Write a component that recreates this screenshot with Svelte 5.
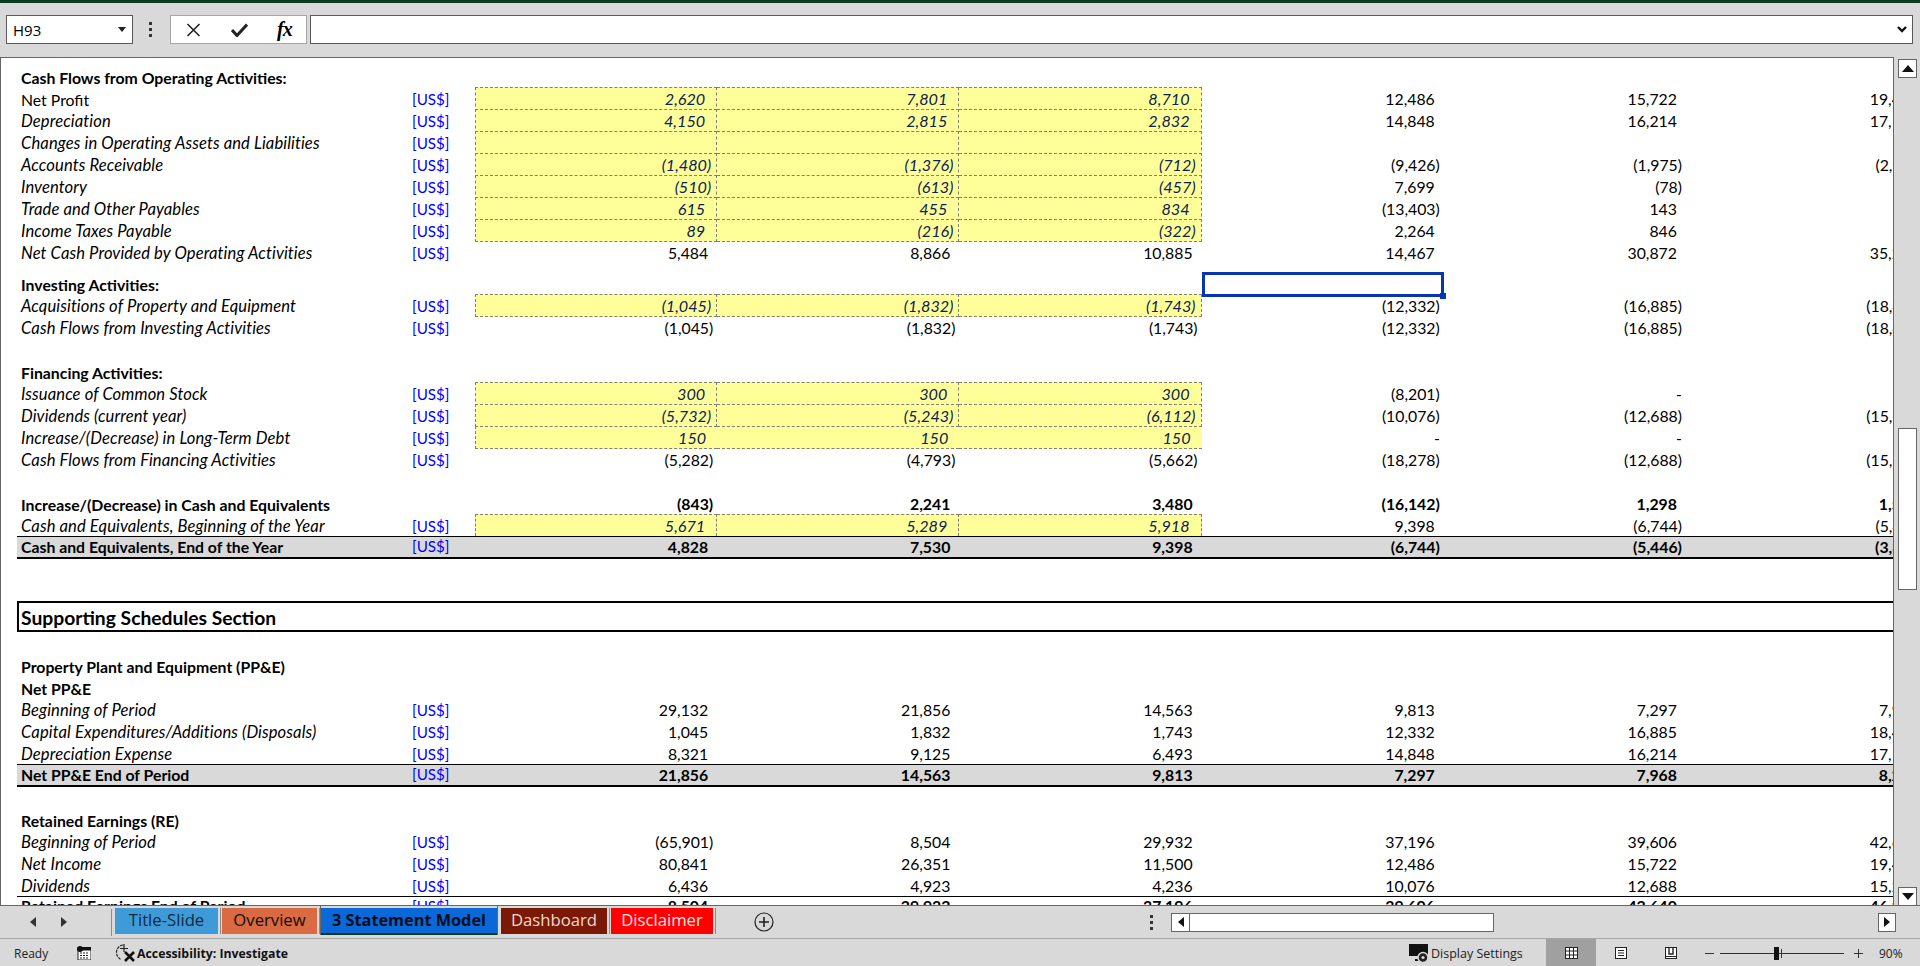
<script lang="ts">
    const row = (label: string, kind: string, vals: string[] = [], opts: any = {}) => ({
        label,
        kind,
        vals,
        unit: true,
        ...opts,
    });
    const gap = (h: number) => ({ gap: h });

    const rows: any[] = [
        gap(7),
        row("Cash Flows from Operating Activities:", "bold", [], { unit: false }),
        row("Net Profit", "plain", ["2,620", "7,801", "8,710", "12,486", "15,722", "19,480"], { input: true }),
        row("Depreciation", "ital", ["4,150", "2,815", "2,832", "14,848", "16,214", "17,121"], { input: true }),
        row("Changes in Operating Assets and Liabilities", "ital", [], { input: true }),
        row("Accounts Receivable", "ital", ["(1,480)", "(1,376)", "(712)", "(9,426)", "(1,975)", "(2,310)"], { input: true }),
        row("Inventory", "ital", ["(510)", "(613)", "(457)", "7,699", "(78)", ""], { input: true }),
        row("Trade and Other Payables", "ital", ["615", "455", "834", "(13,403)", "143", ""], { input: true }),
        row("Income Taxes Payable", "ital", ["89", "(216)", "(322)", "2,264", "846", ""], { input: true, last: true }),
        row("Net Cash Provided by Operating Activities", "ital", ["5,484", "8,866", "10,885", "14,467", "30,872", "35,214"]),
        gap(9),
        row("Investing Activities:", "bold", [], { unit: false, selected: true }),
        row("Acquisitions of Property and Equipment", "ital", ["(1,045)", "(1,832)", "(1,743)", "(12,332)", "(16,885)", "(18,420)"], { input: true, last: true }),
        row("Cash Flows from Investing Activities", "ital", ["(1,045)", "(1,832)", "(1,743)", "(12,332)", "(16,885)", "(18,420)"]),
        gap(22),
        row("Financing Activities:", "bold", [], { unit: false }),
        row("Issuance of Common Stock", "ital", ["300", "300", "300", "(8,201)", "-", ""], { input: true }),
        row("Dividends (current year)", "ital", ["(5,732)", "(5,243)", "(6,112)", "(10,076)", "(12,688)", "(15,240)"], { input: true, last: true }),
        row("Increase/(Decrease) in Long-Term Debt", "ital", ["150", "150", "150", "-", "-", ""], { input: true, bare: true, last: true }),
        row("Cash Flows from Financing Activities", "ital", ["(5,282)", "(4,793)", "(5,662)", "(18,278)", "(12,688)", "(15,240)"]),
        gap(22),
        row("Increase/(Decrease) in Cash and Equivalents", "bold", ["(843)", "2,241", "3,480", "(16,142)", "1,298", "1,554"], { unit: false }),
        row("Cash and Equivalents, Beginning of the Year", "ital", ["5,671", "5,289", "5,918", "9,398", "(6,744)", "(5,446)"], { input: true, open: true }),
        row("Cash and Equivalents, End of the Year", "total", ["4,828", "7,530", "9,398", "(6,744)", "(5,446)", "(3,892)"]),
    ];

    const rows2: any[] = [
        gap(22),
        row("Property Plant and Equipment (PP&E)", "bold", [], { unit: false }),
        row("Net PP&E", "bold", [], { unit: false }),
        row("Beginning of Period", "ital", ["29,132", "21,856", "14,563", "9,813", "7,297", "7,968"]),
        row("Capital Expenditures/Additions (Disposals)", "ital", ["1,045", "1,832", "1,743", "12,332", "16,885", "18,420"]),
        row("Depreciation Expense", "ital", ["8,321", "9,125", "6,493", "14,848", "16,214", "17,121"]),
        row("Net PP&E End of Period", "total", ["21,856", "14,563", "9,813", "7,297", "7,968", "8,267"]),
        gap(21),
        row("Retained Earnings (RE)", "bold", [], { unit: false }),
        row("Beginning of Period", "ital", ["(65,901)", "8,504", "29,932", "37,196", "39,606", "42,640"]),
        row("Net Income", "ital", ["80,841", "26,351", "11,500", "12,486", "15,722", "19,480"]),
        row("Dividends", "ital", ["6,436", "4,923", "4,236", "10,076", "12,688", "15,240"]),
        row("Retained Earnings End of Period", "sum", ["8,504", "29,932", "37,196", "39,606", "42,640", "46,880"]),
    ];

    const tabs = [
        { name: "Title-Slide", cls: "t-blue" },
        { name: "Overview", cls: "t-orange" },
        { name: "3 Statement Model", cls: "t-active" },
        { name: "Dashboard", cls: "t-brown" },
        { name: "Disclaimer", cls: "t-red" },
    ];
</script>

{#snippet sheetRow(r: any)}
    {#if r.gap}
        <div style="height:{r.gap}px"></div>
    {:else}
        <div
            class="row {r.kind}"
            class:input={r.input}
            class:last={r.last}
            class:bare={r.bare}
            class:open={r.open}
        >
            <div class="label">{r.label}</div>
            <div class="unit">{r.unit ? "[US$]" : ""}</div>
            {#each [0, 1, 2, 3, 4, 5] as i}
                {@const v = r.vals[i] ?? ""}
                <div
                    class="num"
                    class:yellow={r.input && i < 3}
                    class:paren={v.startsWith("(") || v === "-"}
                    class:selected={r.selected && i === 3}
                >
                    {v}
                </div>
            {/each}
        </div>
    {/if}
{/snippet}

<div class="app">
    <div class="topline"></div>

    <div class="formula-bar">
        <div class="name-box">
            <span>H93</span>
            <svg width="8" height="5" viewBox="0 0 8 5"><path d="M0 0h8L4 5z" fill="#222" /></svg>
        </div>
        <div class="dots"><i></i><i></i><i></i></div>
        <div class="fx-buttons">
            <svg width="15" height="14" viewBox="0 0 15 14">
                <path d="M1.5 1 L13.5 13 M13.5 1 L1.5 13" stroke="#222" stroke-width="1.6" fill="none" />
            </svg>
            <svg width="17" height="14" viewBox="0 0 17 14">
                <path d="M1 7 L6 12.5 L16 1.5" stroke="#222" stroke-width="3" fill="none" />
            </svg>
            <span class="fx">fx</span>
        </div>
        <div class="formula-input">
            <svg width="10" height="7" viewBox="0 0 10 7">
                <path d="M1 1 L5 5 L9 1" stroke="#111" stroke-width="2.4" fill="none" />
            </svg>
        </div>
    </div>

    <div class="middle">
        <div class="sheet">
            {#each rows as r}
                {@render sheetRow(r)}
            {/each}
            <div style="height:42px"></div>
            <div class="section">Supporting Schedules Section</div>
            {#each rows2 as r}
                {@render sheetRow(r)}
            {/each}
        </div>
        <div class="vscroll">
            <div class="sbtn">
                <svg width="12" height="7" viewBox="0 0 12 7"><path d="M0 7 L6 0 L12 7z" fill="#111" /></svg>
            </div>
            <div class="vtrack"><div class="vthumb"></div></div>
            <div class="sbtn">
                <svg width="12" height="7" viewBox="0 0 12 7"><path d="M0 0 L6 7 L12 0z" fill="#111" /></svg>
            </div>
        </div>
    </div>

    <div class="tabbar">
        <div class="tab-nav">
            <svg width="6" height="10" viewBox="0 0 6 10"><path d="M6 0 L0 5 L6 10z" fill="#333" /></svg>
            <svg width="6" height="10" viewBox="0 0 6 10"><path d="M0 0 L6 5 L0 10z" fill="#333" /></svg>
        </div>
        <div class="tabs">
            {#each tabs as t}
                <div class="tab {t.cls}">{t.name}</div>
            {/each}
        </div>
        <svg class="add" width="20" height="20" viewBox="0 0 20 20">
            <circle cx="10" cy="10" r="9" fill="none" stroke="#222" stroke-width="1.2" />
            <path d="M10 5 V15 M5 10 H15" stroke="#222" stroke-width="1.6" />
        </svg>
        <div class="dots small"><i></i><i></i><i></i></div>
        <div class="hscroll">
            <div class="harrow">
                <svg width="6" height="10" viewBox="0 0 6 10"><path d="M6 0 L0 5 L6 10z" fill="#111" /></svg>
            </div>
            <div class="hthumb"></div>
        </div>
        <div class="harrow right">
            <svg width="6" height="10" viewBox="0 0 6 10"><path d="M0 0 L6 5 L0 10z" fill="#111" /></svg>
        </div>
    </div>

    <div class="statusbar">
        <span class="ready">Ready</span>
        <svg class="calc" width="14" height="14" viewBox="0 0 14 14">
            <rect x="1" y="2" width="13" height="12" fill="#fff" stroke="#222" />
            <rect x="1" y="1" width="13" height="3.5" fill="#111" />
            <circle cx="3" cy="3" r="3" fill="#111" />
            <path d="M3 7h9M3 9.5h9M3 12h9" stroke="#222" stroke-width="1" stroke-dasharray="2 1" />
        </svg>
        <svg class="a11y" width="21" height="20" viewBox="0 0 21 20">
            <path d="M8 2 A7.5 7.5 0 0 0 3 14 L6 17" fill="none" stroke="#222" stroke-width="1.2" stroke-dasharray="3 1" />
            <path d="M9 1 V9 M5 5.5 H13" stroke="#222" stroke-width="1.2" />
            <path d="M10 9 L19 18 M19 9 L10 18" stroke="#111" stroke-width="2.6" />
        </svg>
        <span class="a11y-text">Accessibility: Investigate</span>
        <svg class="display" width="21" height="20" viewBox="0 0 21 20">
            <rect x="0" y="1" width="19" height="12" fill="#111" />
            <path d="M10 13 V17 H6" stroke="#111" stroke-width="2" fill="none" />
            <circle cx="14" cy="14.5" r="5" fill="#222" stroke="#d9d9d9" stroke-width="1.5" />
            <circle cx="14" cy="14.5" r="1.6" fill="#d9d9d9" />
        </svg>
        <span class="display-text">Display Settings</span>
        <div class="view active">
            <svg width="13" height="12" viewBox="0 0 13 12">
                <rect x="0.5" y="0.5" width="12" height="11" fill="#fff" stroke="#222" />
                <path d="M4.5 0V12M8.5 0V12M0 4H13M0 8H13" stroke="#222" stroke-width="1" />
            </svg>
        </div>
        <div class="view">
            <svg width="12" height="12" viewBox="0 0 12 12">
                <rect x="0.5" y="0.5" width="11" height="11" fill="#fff" stroke="#222" />
                <path d="M3 3.5H9M3 6H9M3 8.5H9" stroke="#222" stroke-width="1" />
            </svg>
        </div>
        <div class="view">
            <svg width="12" height="12" viewBox="0 0 12 12">
                <rect x="0.5" y="0.5" width="11" height="11" fill="#fff" stroke="#222" />
                <path d="M4 0V7H8V0" stroke="#222" stroke-width="1.4" fill="none" />
                <path d="M0 9.5H12" stroke="#222" stroke-width="1" />
            </svg>
        </div>
        <div class="zoom">
            <span class="zsign minus"></span>
            <div class="ztrack"><i class="ztick"></i><i class="zthumb"></i></div>
            <span class="zsign plus"></span>
        </div>
        <span class="pct">90%</span>
    </div>
</div>

<style>
    :global(body) {
        margin: 0;
        overflow: hidden;
    }

    .app {
        width: 1920px;
        height: 966px;
        display: flex;
        flex-direction: column;
        background: #d9d9d9;
        overflow: hidden;
        font-family: "Lato", "Liberation Sans", sans-serif;
        color: #000;
    }

    .topline {
        height: 3px;
        background: #0b3b1c;
        flex: none;
    }

    /* formula bar */
    .formula-bar {
        height: 54px;
        flex: none;
        display: flex;
        align-items: flex-start;
        padding-top: 12px;
        padding-left: 6px;
        box-sizing: border-box;
    }

    .name-box {
        width: 127px;
        height: 29px;
        box-sizing: border-box;
        border: 1px solid #595959;
        background: #fff;
        display: flex;
        align-items: center;
        justify-content: space-between;
        padding: 0 6px 0 6px;
        font: 15px "Open Sans", sans-serif;
    }

    .dots {
        display: flex;
        flex-direction: column;
        gap: 3px;
        width: 3px;
        margin: 7px 18px 0 16px;
    }

    .dots i {
        width: 3px;
        height: 3px;
        background: #333;
    }

    .fx-buttons {
        width: 137px;
        height: 29px;
        box-sizing: border-box;
        border: 1px solid #a6a6a6;
        background: #fff;
        display: flex;
        align-items: center;
        gap: 30px;
        padding-left: 15px;
    }

    .fx {
        font: italic 700 20px "Liberation Serif", serif;
        letter-spacing: -1px;
        margin-left: -1px;
    }

    .formula-input {
        width: 1603px;
        height: 29px;
        box-sizing: border-box;
        margin-left: 3px;
        border: 1px solid #595959;
        background: #fff;
        display: flex;
        align-items: center;
        justify-content: flex-end;
        padding-right: 5px;
    }

    /* sheet */
    .middle {
        height: 848px;
        flex: none;
        display: flex;
    }

    .sheet {
        width: 1894px;
        height: 848px;
        box-sizing: border-box;
        border: 1px solid #666;
        border-bottom: none;
        background: #fff;
        overflow: hidden;
        padding-left: 16px;
        flex: none;
    }

    .row {
        display: grid;
        grid-template-columns: 395px 63px repeat(6, 242.2px);
        height: 22px;
        width: 1911px;
        font-size: 15.8px;
        line-height: 25px;
    }

    .label {
        padding-left: 4px;
        white-space: nowrap;
    }

    .unit {
        color: #0000ff;
        font-size: 15.2px;
    }

    .num {
        text-align: right;
        padding-right: 9px;
        box-sizing: border-box;
        white-space: nowrap;
        position: relative;
        line-height: 23px;
    }

    .num.paren {
        padding-right: 4px;
    }

    .ital .label {
        font-style: italic;
        font-size: 16.6px;
        letter-spacing: 0.1px;
    }

    .bold,
    .total,
    .sum {
        font-weight: 700;
    }

    .bold .unit,
    .total .unit,
    .sum .unit {
        font-weight: 400;
    }

    .yellow {
        background: #ffff99;
        color: #0b2350;
        font-style: italic;
        font-size: 16.2px;
        padding-right: 11px;
        border-top: 1px dashed #7f7f7f;
        border-right: 1px dashed #7f7f7f;
        line-height: 21px;
    }

    .yellow.paren {
        padding-right: 5px;
    }

    .label + .unit + .yellow {
        border-left: 1px dashed #7f7f7f;
    }

    .last .yellow {
        height: 23px;
        border-bottom: 1px dashed #7f7f7f;
    }

    .bare .yellow {
        border-right: none;
        border-left: none;
    }

    .open .yellow {
        height: 22px;
    }

    .total {
        height: 23px;
        line-height: 19px;
        background: #d9d9d9;
        border-top: 1px solid #000;
        border-bottom: 2px solid #000;
        box-sizing: border-box;
    }

    .total .num {
        line-height: 19px;
    }

    .sum {
        height: 23px;
        line-height: 18px;
        border-top: 1px solid #000;
        box-sizing: border-box;
    }

    .sum .num {
        line-height: 18px;
    }

    .selected {
        outline: 3px solid #0a35b0;
        outline-offset: -3px;
        z-index: 1;
    }

    .selected::after {
        content: "";
        position: absolute;
        right: -2px;
        bottom: -2px;
        width: 6px;
        height: 6px;
        background: #0a35b0;
    }

    .section {
        height: 31px;
        width: 1911px;
        box-sizing: border-box;
        border: 2px solid #000;
        padding-left: 2px;
        font-weight: 700;
        font-size: 19.3px;
        line-height: 30px;
    }

    /* scrollbars */
    .vscroll {
        width: 26px;
        flex: none;
        display: flex;
        flex-direction: column;
        align-items: flex-start;
        padding-left: 4px;
        padding-top: 2px;
        box-sizing: border-box;
    }

    .sbtn {
        width: 19px;
        height: 19px;
        box-sizing: border-box;
        border: 1px solid #666;
        background: #fff;
        display: flex;
        align-items: center;
        justify-content: center;
        flex: none;
    }

    .vtrack {
        height: 809px;
        padding-top: 350px;
        box-sizing: border-box;
        flex: none;
    }

    .vthumb {
        width: 19px;
        height: 162px;
        box-sizing: border-box;
        border: 1px solid #666;
        background: #fff;
    }

    /* tabs */
    .tabbar {
        height: 33px;
        flex: none;
        display: flex;
        align-items: center;
        border-top: 1px solid #666;
        box-sizing: border-box;
        position: relative;
    }

    .tab-nav {
        width: 112px;
        height: 27px;
        box-sizing: border-box;
        display: flex;
        align-items: center;
        gap: 25px;
        padding-left: 30px;
        border-right: 1px solid #8c8c8c;
        flex: none;
    }

    .tabs {
        display: flex;
        height: 32px;
        align-items: flex-start;
        padding-left: 3px;
        flex: none;
    }

    .tab {
        margin-top: 2px;
        height: 26px;
        line-height: 23px;
        font-family: "Open Sans", sans-serif;
        font-size: 16.7px;
        text-align: center;
        box-sizing: border-box;
        margin-right: 4px;
        box-shadow: 2px 0 0 #d9d9d9, 3px 0 0 #8c8c8c;
        white-space: nowrap;
    }

    .t-blue {
        width: 103px;
        background: #3f9ad8;
        color: #0e2a42;
    }

    .t-orange {
        width: 95px;
        background: #d96a41;
        color: #150a05;
    }

    .t-active {
        width: 176px;
        height: 29px;
        margin-top: 0;
        margin-right: 4px;
        padding-top: 1px;
        line-height: 23px;
        background: #0a68d8;
        font-weight: 700;
        font-size: 16.3px;
        color: #020e22;
        border: solid #d9d9d9;
        border-width: 2px 0 0 0;
        border-bottom: 2px solid #0b3b1c;
        box-shadow: -1px 0 0 #666, 1px 0 0 #666;
    }

    .t-brown {
        width: 106px;
        background: #7a1a06;
        color: #f6d9cd;
    }

    .t-red {
        width: 102px;
        background: #ff0000;
        color: #ffe3e3;
    }

    .add {
        margin-left: 37px;
        flex: none;
    }

    .dots.small {
        margin: 0 0 0 376px;
        flex: none;
    }

    .hscroll {
        margin-left: 18px;
        width: 323px;
        height: 19px;
        display: flex;
        box-sizing: border-box;
        border: 1px solid #666;
        background: #fff;
        flex: none;
    }

    .harrow {
        width: 18px;
        height: 17px;
        display: flex;
        align-items: center;
        justify-content: center;
        background: #fff;
        box-sizing: border-box;
        border-right: 1px solid #666;
        flex: none;
    }

    .harrow.right {
        margin-left: 384px;
        height: 19px;
        border: 1px solid #666;
    }

    /* status bar */
    .statusbar {
        height: 29px;
        flex: none;
        display: flex;
        align-items: center;
        border-top: 1px solid #a6a6a6;
        box-sizing: border-box;
        font: 12.5px "Open Sans", sans-serif;
        color: #222;
    }

    .ready {
        margin-left: 14px;
        width: 63px;
        font-size: 12px;
    }

    .calc {
        flex: none;
        width: 14px;
    }

    .a11y {
        margin-left: 24px;
        flex: none;
    }

    .a11y-text {
        margin-left: 1px;
        font-weight: 700;
        font-size: 12.3px;
        color: #111;
        width: 1272px;
        white-space: nowrap;
    }

    .display {
        margin-left: 0;
        flex: none;
    }

    .display-text {
        width: 115px;
        margin-left: 1px;
        white-space: nowrap;
    }

    .view {
        width: 50px;
        height: 28px;
        display: flex;
        align-items: center;
        justify-content: center;
        flex: none;
    }

    .view.active {
        background: #a0a0a0;
    }

    .zoom {
        display: flex;
        align-items: center;
        margin-left: 9px;
        gap: 6px;
    }

    .zsign {
        width: 9px;
        height: 1px;
        background: #333;
        position: relative;
    }

    .zsign.plus {
        margin-left: 4px;
    }

    .zsign.plus::after {
        content: "";
        position: absolute;
        left: 4px;
        top: -4px;
        width: 1px;
        height: 9px;
        background: #333;
    }

    .ztrack {
        width: 124px;
        height: 1px;
        background: #333;
        position: relative;
    }

    .ztick {
        position: absolute;
        left: 61px;
        top: -4px;
        width: 1px;
        height: 9px;
        background: #333;
    }

    .zthumb {
        position: absolute;
        left: 54px;
        top: -6px;
        width: 5px;
        height: 13px;
        background: #111;
    }

    .pct {
        margin-left: 16px;
        font-size: 12px;
    }
</style>
